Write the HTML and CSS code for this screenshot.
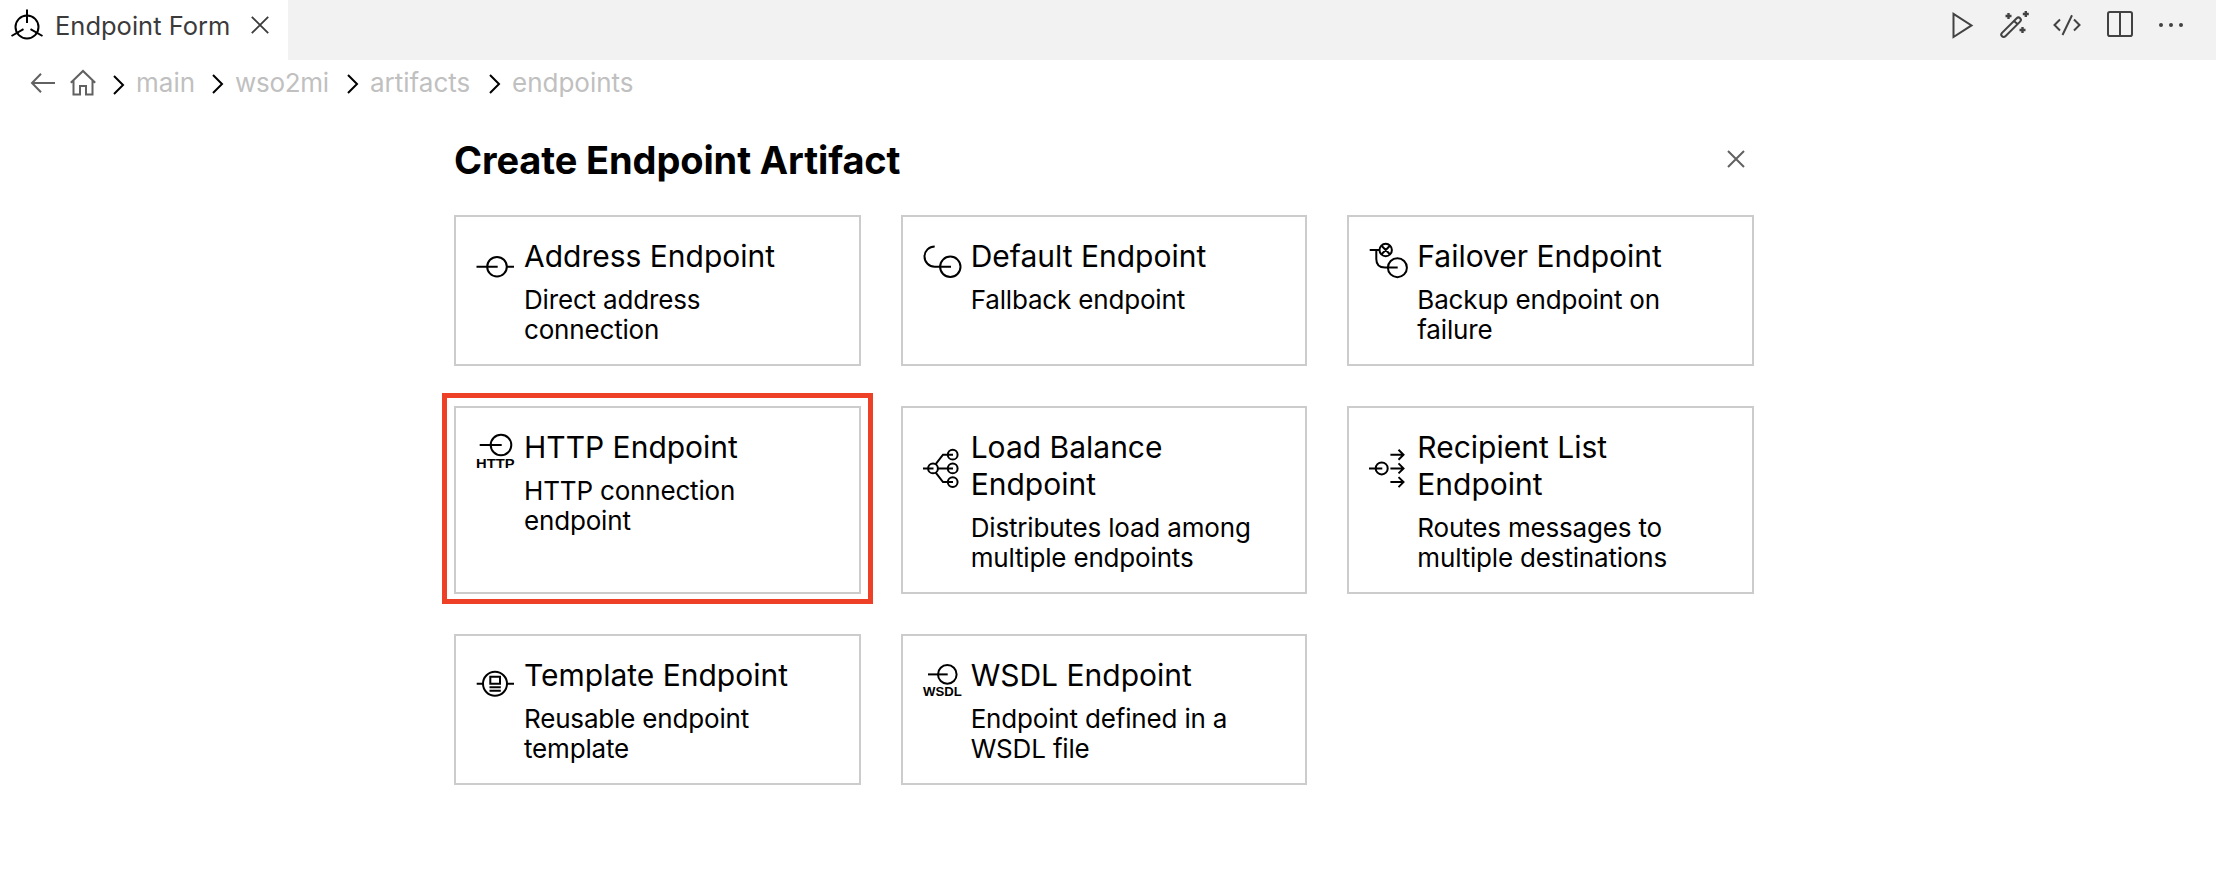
FILE: index.html
```html
<!DOCTYPE html>
<html lang="en">
<head>
<meta charset="utf-8">
<title>Endpoint Form</title>
<link rel="stylesheet" href="styles.css">
</head>
<body>
<header class="tabbar">
  <div class="tab">
    <svg class="tab-logo" width="34" height="34" viewBox="0 0 34 34"><circle cx="17" cy="19" r="11.5"/><path d="M17 1.500V15M1.500 28L13.500 21.200M32.500 28L20.500 21.200"/></svg>
    <span class="tab-label">Endpoint Form</span>
    <svg class="tab-close" width="18" height="18" viewBox="0 0 18 18"><path d="M.8.8L17.200 17.200M17.200.8L.8 17.200"/></svg>
  </div>
  <div class="actions">
    <svg width="22" height="28" viewBox="0 0 22 28"><path d="M2.500 2.800V26L20.500 14.400Z"/></svg>
    <svg class="wand" width="30" height="28" viewBox="0 0 30 28"><path d="M17.700 7.200a2.300 2.300 0 0 1 3.400 3.400L6.400 25.300a2.300 2.300 0 0 1-3.400-3.400ZM15.500 10.500L18.500 13"/><path class="thick" d="M9.500 2.000v6M6.500 5h6M26.800 0v6M23.800 3h6M23.500 16v6M20.500 19h6"/></svg>
    <svg width="28" height="22" viewBox="0 0 28 22"><path d="M7 5.500L1.500 11L7 16.500M21 5.500L26.500 11L21 16.500M19 1.300L9.500 21"/></svg>
    <svg class="split" width="26" height="26" viewBox="0 0 26 26"><rect x="1" y="1" width="24" height="24" rx="1.800"/><path d="M13 1V25"/></svg>
    <svg class="dots" width="24" height="4" viewBox="0 0 24 4"><circle cx="2" cy="2" r="2"/><circle cx="12" cy="2" r="2"/><circle cx="22" cy="2" r="2"/></svg>
  </div>
</header>

<nav class="crumbs">
  <svg class="nav-icon back" width="24" height="20" viewBox="0 0 24 20"><path d="M24 10H1M10 .8L1 10L10 19.200"/></svg>
  <svg class="nav-icon home" width="26" height="26" viewBox="0 0 26 26"><path d="M.8 12.700L13 1L25.200 12.700M3.500 10.500V24.500H10V16H16V24.500H22.500V10.500"/></svg>
  <svg class="sep first" width="11" height="20" viewBox="0 0 11 20"><path d="M1 1L10 10L1 19"/></svg>
  <span class="crumb c-main">main</span>
  <svg class="sep" width="11" height="20" viewBox="0 0 11 20"><path d="M1 1L10 10L1 19"/></svg>
  <span class="crumb c-project">wso2mi</span>
  <svg class="sep" width="11" height="20" viewBox="0 0 11 20"><path d="M1 1L10 10L1 19"/></svg>
  <span class="crumb c-artifacts">artifacts</span>
  <svg class="sep" width="11" height="20" viewBox="0 0 11 20"><path d="M1 1L10 10L1 19"/></svg>
  <span class="crumb">endpoints</span>
</nav>

<main class="form">
  <div class="form-head">
    <h1>Create Endpoint Artifact</h1>
    <svg class="form-close" width="18" height="18" viewBox="0 0 18 18"><path d="M1 1L17 17M17 1L1 17"/></svg>
  </div>
  <div class="grid">
    <section class="card">
      <svg class="icon" viewBox="0 0 40 60"><circle cx="21" cy="29.700" r="9.800"/><path d="M.5 29.700H21.700M31 29.700H38"/></svg>
      <div class="copy"><h2>Address Endpoint</h2><p>Direct address connection</p></div>
    </section>
    <section class="card">
      <svg class="icon" viewBox="0 0 40 60"><circle cx="27.300" cy="29.800" r="10.200"/><path d="M11.700 9.400A10.200 10.200 0 0 0 11.700 29.800H28"/></svg>
      <div class="copy"><h2>Default Endpoint</h2><p>Fallback endpoint</p></div>
    </section>
    <section class="card">
      <svg class="icon" viewBox="0 0 40 60"><circle cx="16.700" cy="13" r="6.200"/><circle cx="28.400" cy="30.700" r="9.500"/><path d="M.7 13H10M7.300 13V22Q7.300 30.500 16 30.500H28.700M12.500 8.800L20.900 17.200M20.900 8.800L12.500 17.200"/></svg>
      <div class="copy"><h2>Failover Endpoint</h2><p>Backup endpoint on failure</p></div>
    </section>
    <section class="card selected">
      <svg class="icon" viewBox="0 0 40 60"><circle cx="25" cy="17" r="10.300"/><path d="M3.700 17H25.700"/><text x="0" y="40.300" textLength="38.500" lengthAdjust="spacingAndGlyphs">HTTP</text></svg>
      <div class="copy"><h2>HTTP Endpoint</h2><p>HTTP connection endpoint</p></div>
    </section>
    <section class="card">
      <svg class="icon" viewBox="0 0 40 60"><circle cx="10" cy="40.400" r="4.900"/><circle cx="29.700" cy="26.700" r="4.900"/><circle cx="29.700" cy="40.400" r="4.900"/><circle cx="29.700" cy="54.100" r="4.900"/><path d="M0 40.400H10.500M15 40.400H30M12.700 36.200L20 26.700H30M12.700 44.600L20 54.100H30"/></svg>
      <div class="copy"><h2>Load Balance Endpoint</h2><p>Distributes load among multiple endpoints</p></div>
    </section>
    <section class="card">
      <svg class="icon" viewBox="0 0 40 60"><circle cx="12.700" cy="40.400" r="6"/><path d="M0 40.400H13.300M21.400 26.700H34.500M29.500 21.700L34.500 26.700L29.500 31.700M21.400 40.400H34.500M29.500 35.400L34.500 40.400L29.500 45.400M21.400 54.100H34.500M29.500 49.100L34.500 54.100L29.500 59.100"/></svg>
      <div class="copy"><h2>Recipient List Endpoint</h2><p>Routes messages to multiple destinations</p></div>
    </section>
    <section class="card">
      <svg class="icon" viewBox="0 0 40 60"><circle cx="19" cy="27.700" r="12"/><path d="M.7 27.700H7M31 27.700H38"/><path d="M14.300 20.800H24V27.700H14.300ZM13.500 31.200H24.800M13.500 34.700H24.800"/></svg>
      <div class="copy"><h2>Template Endpoint</h2><p>Reusable endpoint template</p></div>
    </section>
    <section class="card">
      <svg class="icon" viewBox="0 0 40 60"><circle cx="24.300" cy="18.400" r="9.300"/><path d="M5 18.400H24.700"/><text x="0" y="40" textLength="38.700" lengthAdjust="spacingAndGlyphs">WSDL</text></svg>
      <div class="copy"><h2>WSDL Endpoint</h2><p>Endpoint defined in a WSDL file</p></div>
    </section>
  </div>
</main>
</body>
</html>
```
FILE: styles.css
```css
* { box-sizing: border-box; }
body {
  margin: 0;
  background: #fff;
  color: #000;
  font-family: Inter, "Liberation Sans", sans-serif;
}
svg { display: block; flex: none; fill: none; overflow: visible; }
h1, h2, p { margin: 0; }

.tabbar { display: flex; justify-content: space-between; height: 60px; background: #f2f2f2; }
.tab { display: flex; width: 288px; padding-left: 10px; background: #fff; }
.tab-logo { margin-top: 8px; stroke: #000; stroke-width: 2; }
.tab-label { margin: 9px 0 0 11px; width: 178px; font-size: 25.5px; line-height: 34px; color: #3b3b3b; white-space: nowrap; }
.tab-close { margin: 16px 0 0 18px; stroke: #3b3b3b; stroke-width: 1.8; }
.actions { display: flex; align-items: center; height: 50px; padding-right: 33px; gap: 26px; stroke: #424242; stroke-width: 2; }
.actions .thick { stroke-width: 2.4; }
.actions .wand { margin-right: -2px; }
.actions .split { margin-bottom: 2px; }
.actions .dots { fill: #424242; stroke: none; }

.crumbs { display: flex; align-items: center; height: 46px; padding-left: 31px; font-size: 26px; line-height: 32px; color: #c0c0c0; white-space: nowrap; }
.nav-icon { stroke: #616161; stroke-width: 2; }
.home { margin-left: 15px; }
.sep { margin: 2px 12px 0 0; stroke: #000; stroke-width: 2; }
.sep.first { margin-left: 17px; margin-top: 4px; }
.c-main { width: 76px; }
.c-project { width: 112px; letter-spacing: -0.3px; }
.c-artifacts { width: 119px; }

.form { width: 1300px; margin: 0 0 0 454px; }
.form-head { display: flex; justify-content: space-between; height: 109px; padding: 30px 9px 0 0; }
h1 { font-size: 38px; line-height: 48px; font-weight: 700; white-space: nowrap; letter-spacing: -0.12px; }
.form-close { margin-top: 14px; stroke: #616161; stroke-width: 2; }

.grid { display: grid; grid-template-columns: repeat(3, 1fr); gap: 40px; }
.card { position: relative; display: flex; gap: 8px; padding: 20px; border: 2px solid #ccc; }
.selected::after { content: ""; position: absolute; inset: -15px -14px -12px -14px; border: 5px solid #ee4026; }
.icon { width: 40px; height: 60px; stroke: #000; stroke-width: 2; }
.icon text { fill: #000; stroke: none; font-family: "Liberation Sans", Arial, sans-serif; font-size: 12.6px; font-weight: 700; }
.copy { width: 290px; padding-top: 1px; margin-bottom: -1px; }
h2 { font-size: 30px; line-height: 37px; font-weight: 400; }
p { margin-top: 10px; font-size: 26px; line-height: 30px; letter-spacing: -0.17px; }
```
